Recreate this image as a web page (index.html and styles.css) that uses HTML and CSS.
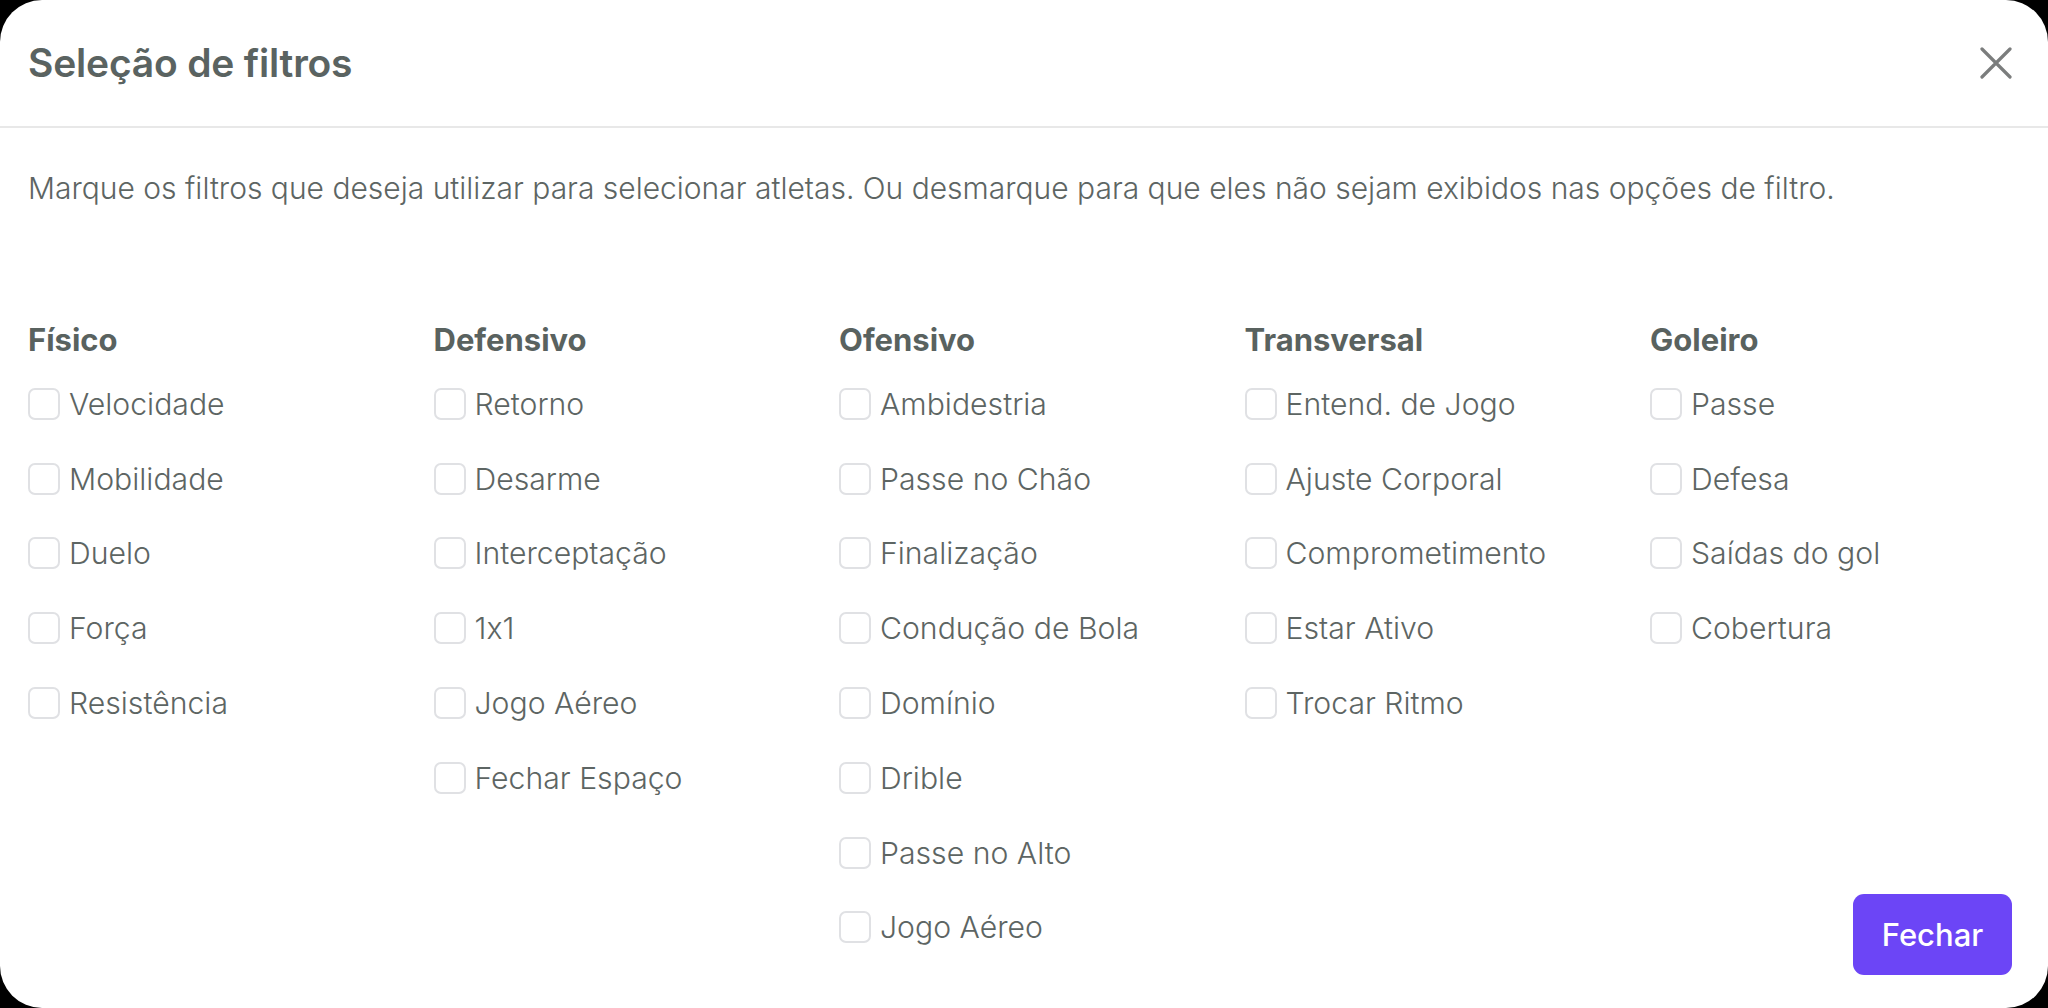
FILE: index.html
```html
<!DOCTYPE html>
<html lang="pt-BR">
<head>
<meta charset="utf-8">
<title>Seleção de filtros</title>
<link rel="stylesheet" href="styles.css">
</head>
<body>
<div class="modal">
  <header class="modal-header">
    <h1 class="modal-title">Seleção de filtros</h1>
    <button class="close-btn" aria-label="Fechar">
      <svg width="32" height="32" viewBox="0 0 32 32"><path d="M2 2 L30 30 M30 2 L2 30" stroke="#7b7d7d" stroke-width="3.2" stroke-linecap="round" fill="none"/></svg>
    </button>
  </header>
  <main class="modal-body">
    <p class="desc">Marque os filtros que deseja utilizar para selecionar atletas. Ou desmarque para que eles não sejam exibidos nas opções de filtro.</p>
    <div class="grid">
      <section class="col">
        <h2>Físico</h2>
        <label class="opt"><span class="box"></span>Velocidade</label>
        <label class="opt"><span class="box"></span>Mobilidade</label>
        <label class="opt"><span class="box"></span>Duelo</label>
        <label class="opt"><span class="box"></span>Força</label>
        <label class="opt"><span class="box"></span>Resistência</label>
      </section>
      <section class="col">
        <h2>Defensivo</h2>
        <label class="opt"><span class="box"></span>Retorno</label>
        <label class="opt"><span class="box"></span>Desarme</label>
        <label class="opt"><span class="box"></span>Interceptação</label>
        <label class="opt"><span class="box"></span>1x1</label>
        <label class="opt"><span class="box"></span>Jogo Aéreo</label>
        <label class="opt"><span class="box"></span>Fechar Espaço</label>
      </section>
      <section class="col">
        <h2>Ofensivo</h2>
        <label class="opt"><span class="box"></span>Ambidestria</label>
        <label class="opt"><span class="box"></span>Passe no Chão</label>
        <label class="opt"><span class="box"></span>Finalização</label>
        <label class="opt"><span class="box"></span>Condução de Bola</label>
        <label class="opt"><span class="box"></span>Domínio</label>
        <label class="opt"><span class="box"></span>Drible</label>
        <label class="opt"><span class="box"></span>Passe no Alto</label>
        <label class="opt"><span class="box"></span>Jogo Aéreo</label>
      </section>
      <section class="col">
        <h2>Transversal</h2>
        <label class="opt"><span class="box"></span>Entend. de Jogo</label>
        <label class="opt"><span class="box"></span>Ajuste Corporal</label>
        <label class="opt"><span class="box"></span>Comprometimento</label>
        <label class="opt"><span class="box"></span>Estar Ativo</label>
        <label class="opt"><span class="box"></span>Trocar Ritmo</label>
      </section>
      <section class="col col-last">
        <h2>Goleiro</h2>
        <label class="opt"><span class="box"></span>Passe</label>
        <label class="opt"><span class="box"></span>Defesa</label>
        <label class="opt"><span class="box"></span>Saídas do gol</label>
        <label class="opt"><span class="box"></span>Cobertura</label>
      </section>
      <button class="primary-btn">Fechar</button>
    </div>
  </main>
</div>
</body>
</html>
```

FILE: styles.css
```css
html, body {
  margin: 0;
  padding: 0;
  background: #000;
}

body {
  width: 2048px;
  height: 1008px;
  overflow: hidden;
  font-family: Inter, "Noto Sans", "Liberation Sans", sans-serif;
  font-feature-settings: "calt" 0;
  color: #5d6563;
}

.modal {
  width: 2048px;
  height: 1008px;
  background: #fff;
  border-radius: 42px;
  display: flex;
  flex-direction: column;
  box-sizing: border-box;
}

.modal-header {
  height: 128px;
  flex: 0 0 128px;
  box-sizing: border-box;
  display: flex;
  align-items: center;
  justify-content: space-between;
  padding: 0 36px 0 28px;
  border-bottom: 2px solid #e8e8e8;
}

.modal-title {
  margin: 0;
  font-size: 39px;
  line-height: 40px;
  font-weight: 600;
  color: #5a6361;
  letter-spacing: -0.2px;
}

.close-btn {
  border: 0;
  background: none;
  padding: 0;
  width: 32px;
  height: 32px;
  display: flex;
  align-items: center;
  justify-content: center;
  cursor: pointer;
}

.modal-body {
  flex: 1;
  display: flex;
  flex-direction: column;
  padding: 0 36px 33px 28px;
}

.desc {
  margin: 40px 0 0;
  font-size: 30px;
  line-height: 40px;
  font-weight: 300;
  color: #5d6563;
}

.grid {
  flex: 1;
  margin-top: 111.5px;
  display: grid;
  grid-template-columns: repeat(4, 405.5px) 1fr;
  grid-template-rows: 1fr;
}

.col {
  grid-row: 1;
  align-self: start;
  display: flex;
  flex-direction: column;
}

.col h2 {
  margin: 0 0 7px;
  font-size: 31px;
  line-height: 40px;
  font-weight: 700;
  color: #59625f;
}

.opt {
  height: 74.8px;
  display: flex;
  align-items: center;
  gap: 9px;
  font-size: 30.2px;
  font-weight: 300;
  color: #5d6563;
}

.box {
  width: 32px;
  height: 32px;
  box-sizing: border-box;
  border: 2px solid #e0e1e4;
  border-radius: 7px;
  background: #fff;
  flex: 0 0 32px;
}

.col-last {
  grid-column: 5;
}

.primary-btn {
  grid-column: 5;
  grid-row: 1;
  align-self: end;
  justify-self: end;
  width: 159px;
  height: 81px;
  border: 0;
  border-radius: 11px;
  background: #6c45f6;
  color: #fff;
  font-family: Inter, "Noto Sans", "Liberation Sans", sans-serif;
  font-size: 31px;
  font-weight: 500;
  cursor: pointer;
}
```
